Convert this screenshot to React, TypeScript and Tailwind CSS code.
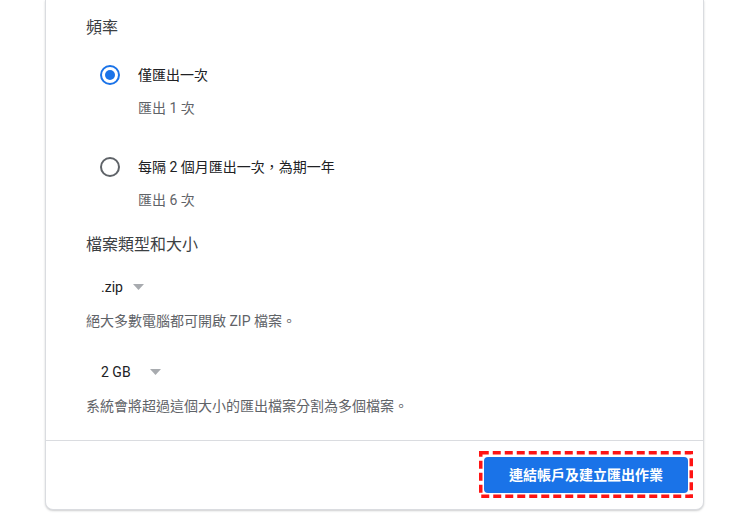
import React from "react";

const font = "font-['Roboto','Noto_Sans_CJK_TC',sans-serif]";

function Radio({ checked }: { checked?: boolean }) {
  return (
    <span
      className={`flex h-5 w-5 shrink-0 items-center justify-center rounded-full border-2 ${
        checked ? "border-[#1a73e8]" : "border-[#5f6368]"
      }`}
    >
      {checked && <span className="h-[10px] w-[10px] rounded-full bg-[#1a73e8]" />}
    </span>
  );
}

function Caret() {
  return (
    <svg width="11" height="6" viewBox="0 0 11 6" className="shrink-0">
      <path d="M0 0 L11 0 L5.5 6 Z" fill="#a8abaf" />
    </svg>
  );
}

export default function App() {
  return (
    <div className={`min-h-[521px] w-[748px] bg-white ${font}`}>
      <div className="ml-[45px] w-[659px] rounded-b-lg border-x border-b border-[#dadce0] bg-white shadow-[0_1px_2px_rgba(60,64,67,0.25)]">
        {/* 頻率 */}
        <div className="px-10 pt-4">
          <h3 className="h-6 text-base leading-6 text-[#3c4043]">頻率</h3>

          <div className="mt-[15px] pl-[14px]">
            <div className="flex h-10 items-center gap-[18px]">
              <Radio checked />
              <span className="text-sm text-[#202124]">僅匯出一次</span>
            </div>
            <p className="mt-[3px] h-5 pl-[38px] text-sm leading-5 text-[#5f6368]">匯出 1 次</p>

            <div className="mt-[29px] flex h-10 items-center gap-[18px]">
              <Radio />
              <span className="text-sm text-[#202124]">每隔 2 個月匯出一次，為期一年</span>
            </div>
            <p className="mt-[3px] h-5 pl-[38px] text-sm leading-5 text-[#5f6368]">匯出 6 次</p>
          </div>

          {/* 檔案類型和大小 */}
          <h3 className="mt-[23px] h-6 text-base leading-6 text-[#3c4043]">檔案類型和大小</h3>

          <div className="mt-[18px] flex h-6 items-center gap-[10px] pl-[15px]">
            <span className="text-sm text-[#202124]">.zip</span>
            <Caret />
          </div>
          <p className="mt-3 h-5 text-sm leading-5 text-[#5f6368]">絕大多數電腦都可開啟 ZIP 檔案。</p>

          <div className="mt-[29px] flex h-6 items-center gap-[19px] pl-[15px]">
            <span className="text-sm text-[#202124]">2 GB</span>
            <Caret />
          </div>
          <p className="mt-3 h-5 text-sm leading-5 text-[#5f6368]">系統會將超過這個大小的匯出檔案分割為多個檔案。</p>
        </div>

        <div className="mt-[24px] border-t border-[#dadce0]" />

        <div className="flex justify-end pb-[11px] pr-[10px] pt-[10px]">
          {/* highlight annotation */}
          <div className="relative px-[5px] pb-[5px] pt-[6px]">
            <svg width="214" height="47" className="pointer-events-none absolute left-0 top-0">
              <rect
                x="1.75"
                y="1.75"
                width="210.5"
                height="43.5"
                fill="none"
                stroke="#ff1414"
                strokeWidth="3.5"
                strokeDasharray="8 4"
              />
            </svg>
            <button className="block h-9 w-[204px] rounded bg-[#1a73e8] text-sm font-bold text-white">
              連結帳戶及建立匯出作業
            </button>
          </div>
        </div>
      </div>
    </div>
  );
}
